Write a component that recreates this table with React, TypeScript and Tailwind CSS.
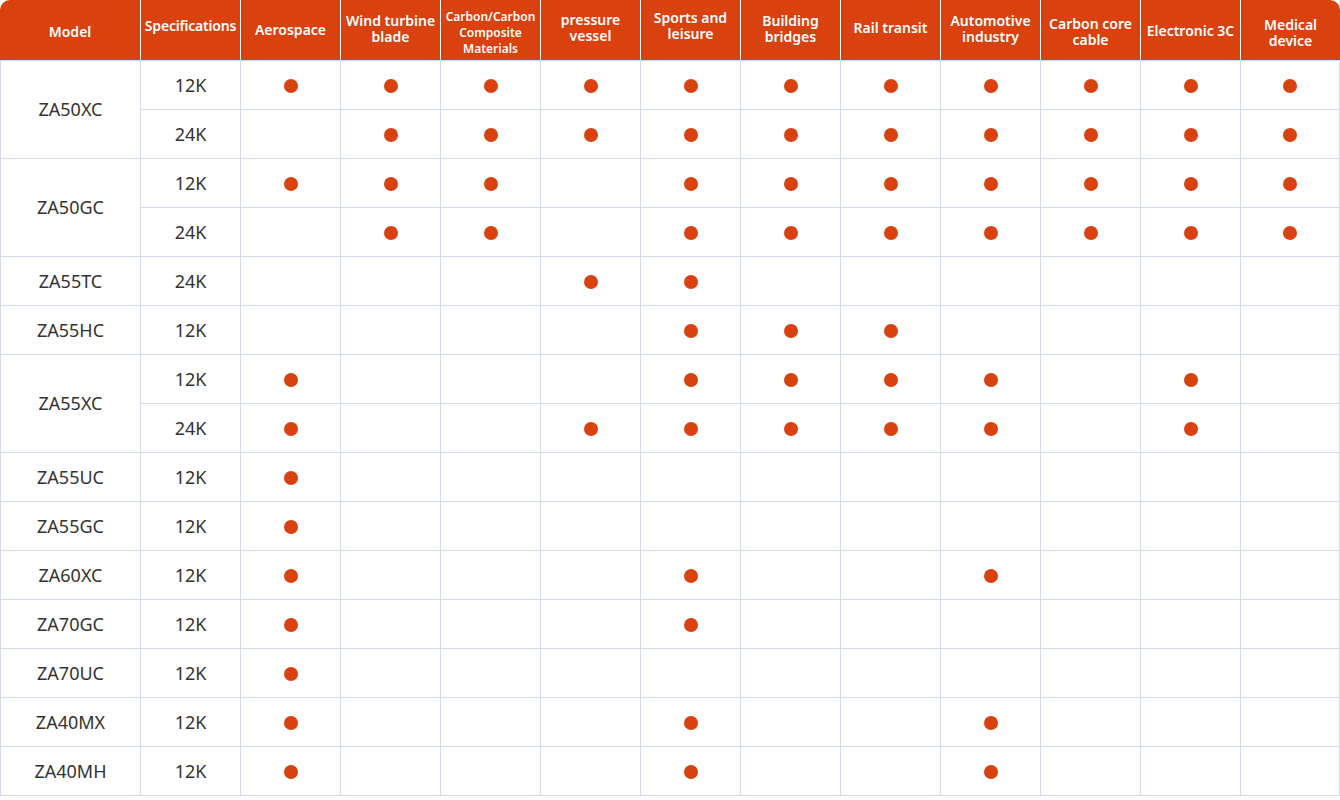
import React from "react";

const cols = [
  { label: ["Aerospace"], small: false, shift: "" },
  { label: ["Wind turbine", "blade"], small: false, shift: "-translate-y-[1px]" },
  { label: ["Carbon/Carbon", "Composite", "Materials"], small: true, shift: "translate-y-[3px]" },
  { label: ["pressure", "vessel"], small: false, shift: "-translate-y-[2px]" },
  { label: ["Sports and", "leisure"], small: false, shift: "-translate-y-[4px]" },
  { label: ["Building", "bridges"], small: false, shift: "-translate-y-[1px]" },
  { label: ["Rail transit"], small: false, shift: "-translate-y-[2px]" },
  { label: ["Automotive", "industry"], small: false, shift: "-translate-y-[1px]" },
  { label: ["Carbon core", "cable"], small: false, shift: "translate-y-[2px]" },
  { label: ["Electronic 3C"], small: false, shift: "translate-y-[1px]" },
  { label: ["Medical", "device"], small: false, shift: "translate-y-[3px]" },
];

type Spec = { spec: string; dots: number[] };
type Model = { name: string; specs: Spec[] };

const all = [0, 1, 2, 3, 4, 5, 6, 7, 8, 9, 10];

const models: Model[] = [
  { name: "ZA50XC", specs: [ { spec: "12K", dots: all }, { spec: "24K", dots: [1, 2, 3, 4, 5, 6, 7, 8, 9, 10] } ] },
  { name: "ZA50GC", specs: [ { spec: "12K", dots: [0, 1, 2, 4, 5, 6, 7, 8, 9, 10] }, { spec: "24K", dots: [1, 2, 4, 5, 6, 7, 8, 9, 10] } ] },
  { name: "ZA55TC", specs: [ { spec: "24K", dots: [3, 4] } ] },
  { name: "ZA55HC", specs: [ { spec: "12K", dots: [4, 5, 6] } ] },
  { name: "ZA55XC", specs: [ { spec: "12K", dots: [0, 4, 5, 6, 7, 9] }, { spec: "24K", dots: [0, 3, 4, 5, 6, 7, 9] } ] },
  { name: "ZA55UC", specs: [ { spec: "12K", dots: [0] } ] },
  { name: "ZA55GC", specs: [ { spec: "12K", dots: [0] } ] },
  { name: "ZA60XC", specs: [ { spec: "12K", dots: [0, 4, 7] } ] },
  { name: "ZA70GC", specs: [ { spec: "12K", dots: [0, 4] } ] },
  { name: "ZA70UC", specs: [ { spec: "12K", dots: [0] } ] },
  { name: "ZA40MX", specs: [ { spec: "12K", dots: [0, 4, 7] } ] },
  { name: "ZA40MH", specs: [ { spec: "12K", dots: [0, 4, 7] } ] },
];

const bodyCell =
  "flex items-center justify-center border-l border-t border-[#d4dbe8] text-[18px] text-[#333333]";

export default function App() {
  const cells: React.ReactNode[] = [];
  models.forEach((m) => {
    const span = m.specs.length;
    m.specs.forEach((s, i) => {
      if (i === 0) {
        cells.push(
          <div
            key={m.name}
            className={`${bodyCell} ${span === 2 ? "row-span-2" : ""}`}
          >
            {m.name}
          </div>
        );
      }
      cells.push(
        <div key={m.name + s.spec} className={bodyCell}>
          {s.spec}
        </div>
      );
      cols.forEach((_, ci) => {
        cells.push(
          <div
            key={m.name + s.spec + ci}
            className={`${bodyCell} ${ci === 10 ? "border-r" : ""}`}
          >
            {s.dots.includes(ci) ? (
              <span className="mt-[1px] block h-[14px] w-[14px] rounded-full bg-[#d9410f]" />
            ) : null}
          </div>
        );
      });
    });
  });

  return (
    <div
      className="w-[1340px] bg-white"
      style={{ fontFamily: "'Noto Sans', Lato, sans-serif" }}
    >
      <div className="grid grid-cols-[140px_100px_repeat(11,100px)] grid-rows-[60px] auto-rows-[49px] border-b border-[#d4dbe8]">
        <div className="flex items-center justify-center rounded-tl-[10px] bg-[#d9410f] pt-[2px] text-[14px] font-semibold text-white">
          Model
        </div>
        <div className="flex items-center justify-center border-l border-white bg-[#d9410f] pb-[10px] text-[14px] font-semibold tracking-[-0.2px] text-white">
          Specifications
        </div>
        {cols.map((c, i) => (
          <div
            key={i}
            className={`flex items-center justify-center border-l border-white bg-[#d9410f] text-center font-semibold text-white ${
              c.small ? "text-[12px] leading-[16px]" : "text-[14px] leading-[16px]"
            } ${i === 10 ? "rounded-tr-[10px]" : ""}`}
          >
            <div className={`flex flex-col items-center ${c.shift}`}>
              {c.label.map((l, j) => (
                <span key={j} className="whitespace-nowrap">{l}</span>
              ))}
            </div>
          </div>
        ))}
        {cells}
      </div>
    </div>
  );
}
